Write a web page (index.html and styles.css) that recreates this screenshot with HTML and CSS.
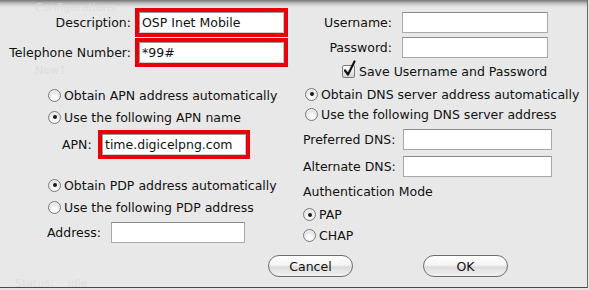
FILE: index.html
```html
<!DOCTYPE html>
<html lang="en">
<head>
  <meta charset="UTF-8">
  <title>Modem Settings</title>
  <link rel="stylesheet" href="styles.css">
</head>
<body>
  <div class="sheet">
    <!-- window behind the sheet shows through faintly -->
    <div class="ghost">
      <span class="g1">Configurations</span>
      <span class="g3">New1</span>
      <span class="g6">Status:&nbsp;&nbsp;&nbsp;&nbsp;idle</span>
    </div>

    <div class="panes">
      <div class="pane pane-left">
        <div class="row row-desc">
          <span class="lbl lbl-desc">Description:</span>
          <div class="mark mark-desc"><div class="field">OSP Inet Mobile</div></div>
        </div>
        <div class="row row-tel">
          <span class="lbl lbl-desc">Telephone Number:</span>
          <div class="mark mark-desc"><div class="field">*99#</div></div>
        </div>

        <div class="choices choices-apn">
          <div class="choice"><span class="radio"></span>Obtain APN address automatically</div>
          <div class="choice"><span class="radio on"></span>Use the following APN name</div>
        </div>
        <div class="row row-apn">
          <span class="lbl lbl-apn">APN:</span>
          <div class="mark mark-apn"><div class="field">time.digicelpng.com</div></div>
        </div>

        <div class="choices choices-pdp">
          <div class="choice"><span class="radio on"></span>Obtain PDP address automatically</div>
          <div class="choice"><span class="radio"></span>Use the following PDP address</div>
        </div>
        <div class="row row-addr">
          <span class="lbl lbl-addr">Address:</span>
          <div class="field field-addr"></div>
        </div>
      </div>

      <div class="pane pane-right">
        <div class="row row-user">
          <span class="lbl lbl-user">Username:</span>
          <div class="field field-user"></div>
        </div>
        <div class="row row-pass">
          <span class="lbl lbl-user">Password:</span>
          <div class="field field-user"></div>
        </div>
        <div class="row row-save">
          <span class="check">
            <svg width="16" height="18" viewBox="0 0 16 18"><path d="M3 10.5 L6 14.5 L12.5 1.5" fill="none" stroke="#111" stroke-width="2.2" stroke-linecap="round" stroke-linejoin="round"/></svg>
          </span>Save Username and Password
        </div>

        <div class="choices choices-dns">
          <div class="choice"><span class="radio on"></span>Obtain DNS server address automatically</div>
          <div class="choice"><span class="radio"></span>Use the following DNS server address</div>
        </div>
        <div class="row row-pref">
          <span class="lbl lbl-dns">Preferred DNS:</span>
          <div class="field field-dns"></div>
        </div>
        <div class="row row-alt">
          <span class="lbl lbl-dns">Alternate DNS:</span>
          <div class="field field-dns"></div>
        </div>

        <div class="auth-title">Authentication Mode</div>
        <div class="choices choices-auth">
          <div class="choice"><span class="radio on"></span>PAP</div>
          <div class="choice"><span class="radio"></span>CHAP</div>
        </div>
      </div>
    </div>

    <div class="actions">
      <button class="pill">Cancel</button>
      <button class="pill">OK</button>
    </div>
  </div>
</body>
</html>
```

FILE: styles.css
```css
html, body {
  margin: 0;
  height: 290px;
  overflow: hidden;
  background: #e4e4e4;
}
body {
  font-family: 'DejaVu Sans', 'Liberation Sans', sans-serif;
  font-size: 12.5px;
  color: #111;
}
.sheet {
  position: relative;
  width: 587px;
  height: 287px;
  border-right: 1px solid #6a6a6a;
  border-bottom: 1px solid #4a4a4a;
  background: linear-gradient(to bottom, #747474 0, #b8b8b8 3px, #dcdcdc 6px, #e8e8e8 8px);
}
.ghost span {
  position: absolute;
  color: #dddddd;
  font-size: 11px;
  line-height: 13px;
  white-space: nowrap;
}
.ghost .g1 { left: 35px; top: 1px; }
.ghost .g3 { left: 35px; top: 64px; }
.ghost .g6 { left: 15px; top: 277px; }

.panes {
  position: relative;
  display: flex;
  height: 246px;
}
.pane-left {
  width: 296px;
}
.pane-right {
  flex: 1;
}
.row {
  display: flex;
  align-items: center;
}
.lbl {
  white-space: nowrap;
}

/* red highlight boxes */
.mark {
  box-sizing: border-box;
  border: 4px solid #e8000b;
  background: #fff;
  height: 29px;
  padding: 0;
}
.mark .field {
  height: 100%;
  box-sizing: border-box;
  border: 1px solid #9a9a9a;
  border-right-color: #c4c4c4;
  border-bottom-color: #d0d0d0;
  font-size: 12.5px;
  line-height: 19px;
  padding-left: 2px;
  width: auto;
}
.field {
  box-sizing: border-box;
  background: #fff;
  border: 1px solid #a8a8a8;
  border-top-color: #8c8c8c;
  height: 21px;
}

.row-desc { margin-top: 8px; height: 29px; }
.row-tel { margin-top: 1px; height: 29px; }
.lbl-desc {
  width: 131px;
  text-align: right;
  margin-right: 4px;
}
.mark-desc { width: 153px; }

.choices-apn { margin-top: 17px; padding-left: 48px; }
.choices-pdp { margin-top: 15px; padding-left: 48px; }
.choice {
  display: flex;
  align-items: center;
  height: 22px;
  white-space: nowrap;
}
.choices-dns { margin-top: 3px; padding-left: 9px; }
.choices-dns .choice { height: 20px; }
.choices-auth { margin-top: 4px; padding-left: 7px; }
.choices-auth .choice { height: 21px; }

.radio {
  box-sizing: border-box;
  width: 13px;
  height: 13px;
  border-radius: 50%;
  border: 1px solid #7a7a7a;
  background: radial-gradient(circle at 50% 70%, #ffffff 0, #f2f2f2 40%, #c9c9c9 100%);
  box-shadow: inset 0 1px 1px rgba(255,255,255,0.8);
  margin-right: 3px;
  display: flex;
  align-items: center;
  justify-content: center;
  flex: none;
}
.radio.on::after {
  content: "";
  width: 4px;
  height: 4px;
  border-radius: 50%;
  background: #1a1a1a;
}

.row-apn { margin-top: 2px; height: 29px; padding-left: 62px; }
.lbl-apn { width: 36px; }
.mark-apn { width: 152px; }

.row-addr { margin-top: 4px; height: 21px; padding-left: 47px; }
.lbl-addr { width: 64px; }
.field-addr { width: 134px; }

.row-user { margin-top: 12px; height: 21px; }
.row-pass { margin-top: 4px; height: 21px; }
.lbl-user {
  width: 96px;
  text-align: right;
  margin-right: 10px;
}
.field-user { width: 146px; }

.row-save {
  margin-top: 3px;
  height: 20px;
  padding-left: 46px;
  white-space: nowrap;
}
.check {
  position: relative;
  box-sizing: border-box;
  width: 13px;
  height: 13px;
  border: 1px solid #7a7a7a;
  border-radius: 2px;
  background: linear-gradient(#ffffff, #d6d6d6);
  margin-right: 4px;
  flex: none;
}
.check svg {
  position: absolute;
  left: -1px;
  top: -6px;
}

.row-pref { margin-top: 5px; height: 21px; padding-left: 7px; }
.row-alt { margin-top: 6px; height: 21px; padding-left: 7px; }
.lbl-dns { width: 100px; }
.field-dns { width: 149px; }

.auth-title {
  margin-top: 7px;
  padding-left: 7px;
  height: 16px;
  line-height: 16px;
}

.actions {
  position: relative;
  display: flex;
  gap: 70px;
  margin-top: 9px;
  padding-left: 268px;
}
.pill {
  box-sizing: border-box;
  width: 85px;
  height: 22px;
  border-radius: 11px;
  border: 1px solid #6e6e6e;
  background: linear-gradient(to bottom, #ffffff 0, #f4f4f4 45%, #dcdcdc 55%, #f2f2f2 100%);
  font-family: 'DejaVu Sans', 'Liberation Sans', sans-serif;
  font-size: 12.5px;
  color: #111;
  padding: 0;
}
```
